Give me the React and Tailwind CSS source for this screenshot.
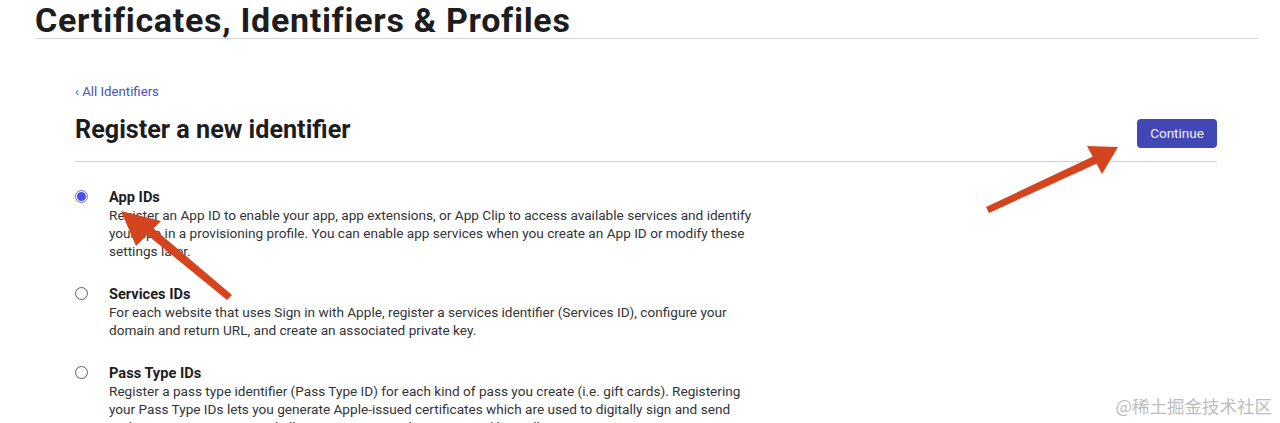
import React from "react";

const Option = ({ checked, title, children }) => (
  <div className="flex items-start">
    <div className="w-[34px] pt-[2px]">
      {checked ? (
        <span className="flex w-[13px] h-[13px] rounded-full border border-[#6a6ee6] bg-white items-center justify-center">
          <span className="block w-[9px] h-[9px] rounded-full bg-[#4a4ef0]" />
        </span>
      ) : (
        <span className="block w-[13px] h-[13px] rounded-full border border-[#5e5e62] bg-white" />
      )}
    </div>
    <div className="w-[648px]">
      <div className="text-[14.6px] leading-[18px] font-bold text-[#1d1d1f]">{title}</div>
      <p className="text-[13.6px] leading-[18px] text-[#333336]">{children}</p>
    </div>
  </div>
);

export default function App() {
  return (
    <div
      className="relative w-[1280px] h-[423px] overflow-hidden bg-white text-[#1d1d1f]"
      style={{ fontFamily: "Roboto, 'Liberation Sans', sans-serif" }}
    >
      <div className="pl-[35px] pr-[22px]">
        <h1 className="text-[34px] leading-[36px] font-bold tracking-[0.7px] border-b border-[#d6d6d6] pt-[2px]">
          Certificates, Identifiers &amp; Profiles
        </h1>
      </div>
      <div className="pl-[75px] pr-[63px] pt-[45px]">
        <a className="block text-[13.2px] leading-[16px] text-[#4c52b8]">‹ All Identifiers</a>
        <div className="flex items-start justify-between border-b border-[#d2d2d2] pt-[16px] pb-[13px]">
          <h2 className="text-[25.2px] leading-[28px] font-bold text-[#1d1d1f]">
            Register a new identifier
          </h2>
          <button className="w-[80px] h-[29px] mt-[3px] rounded-[4px] bg-[#4347b6] text-[#f2f2ff] text-[13.5px]">
            Continue
          </button>
        </div>
        <div className="pt-[26px] flex flex-col gap-[25px]">
          <Option checked title="App IDs">
            Register an App ID to enable your app, app extensions, or App Clip to access available services and identify
            your app in a provisioning profile. You can enable app services when you create an App ID or modify these
            settings later.
          </Option>
          <Option title="Services IDs">
            For each website that uses Sign in with Apple, register a services identifier (Services ID), configure your
            domain and return URL, and create an associated private key.
          </Option>
          <Option title="Pass Type IDs">
            Register a pass type identifier (Pass Type ID) for each kind of pass you create (i.e. gift cards). Registering
            your Pass Type IDs lets you generate Apple-issued certificates which are used to digitally sign and send
            updates to your passes, and allow your passes to be recognized by Wallet.
          </Option>
        </div>
      </div>

      <svg className="absolute left-0 top-0 pointer-events-none" width="1280" height="423">
        <polygon points="232,295 227,300 140,229 146,222" fill="#d4441f" />
        <polygon points="121,211 161,221 136,246" fill="#d4441f" />
        <polygon points="986,207 989,213 1098,163 1094,156" fill="#d4441f" />
        <polygon points="1118,147 1087,146 1102,174" fill="#d4441f" />
      </svg>

      <div
        className="absolute right-[8px] bottom-[4px] text-[17.5px] text-[#bdbdbd]"
        style={{ fontFamily: "'Noto Sans CJK SC', sans-serif" }}
      >
        @稀土掘金技术社区
      </div>
    </div>
  );
}
